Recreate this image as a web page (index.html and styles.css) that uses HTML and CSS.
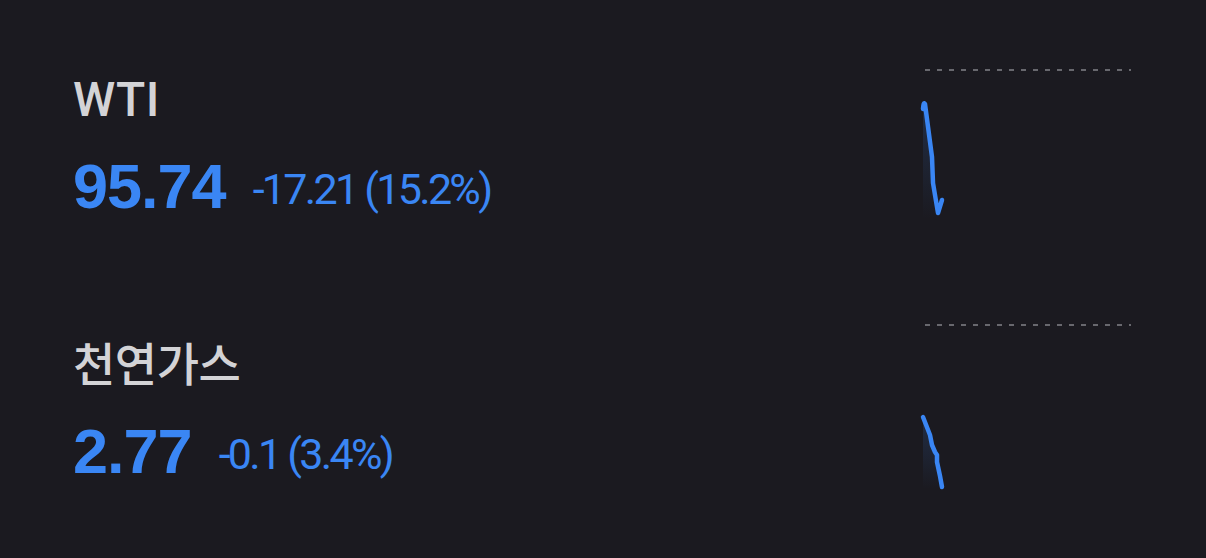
FILE: index.html
```html
<!DOCTYPE html>
<html lang="ko">

<head>
    <meta charset="UTF-8">
    <meta name="viewport" content="width=device-width, initial-scale=1.0">
    <title>원자재 시세</title>
    <link rel="stylesheet" href="styles.css">
</head>

<body>
    <div class="board">
        <div class="quote">
            <div class="info">
                <div class="name">WTI</div>
                <div class="price">
                    <span class="last">95.74</span>
                    <span class="change">-17.21 (15.2%)</span>
                </div>
            </div>
            <svg class="spark" width="220" height="265" viewBox="0 0 220 265">
                <defs>
                    <linearGradient id="fadeA" x1="0" y1="0" x2="0" y2="1">
                        <stop offset="0" stop-color="#3a86f4" stop-opacity="0.18" />
                        <stop offset="1" stop-color="#3a86f4" stop-opacity="0" />
                    </linearGradient>
                </defs>
                <line class="base" x1="10" y1="16" x2="216" y2="16" />
                <path d="M8 50 L17 103 L18 129 L22 153 L23 165 L8 165 Z" fill="url(#fadeA)" />
                <path class="line" d="M8 55 Q8.5 47 10 50 L17 103 L18 129 L22 153 L23 159 L27 146" />
            </svg>
        </div>
        <div class="quote">
            <div class="info">
                <div class="name name-ko">천연가스</div>
                <div class="price">
                    <span class="last">2.77</span>
                    <span class="change">-0.1 (3.4%)</span>
                </div>
            </div>
            <svg class="spark" width="220" height="265" viewBox="0 0 220 265">
                <defs>
                    <linearGradient id="fadeB" x1="0" y1="0" x2="0" y2="1">
                        <stop offset="0" stop-color="#3a86f4" stop-opacity="0.18" />
                        <stop offset="1" stop-color="#3a86f4" stop-opacity="0" />
                    </linearGradient>
                </defs>
                <line class="base" x1="10" y1="6" x2="216" y2="6" />
                <path d="M8 98 L15 116 L17 126 L20 133 L22 136 L22 143 L25 157 L27 168 L8 170 Z" fill="url(#fadeB)" />
                <path class="line" d="M8 98 L15 116 L17 126 L20 133 L22 136 L22 143 L25 157 L27 168" />
            </svg>
        </div>
    </div>
</body>

</html>
```
FILE: styles.css
```css
html,
body {
    margin: 0;
    padding: 0;
    height: 100%;
}

body {
    background: #1b1a20;
    overflow: hidden;
    font-family: "Liberation Sans", "Noto Sans CJK KR", sans-serif;
}

.board {
    padding-top: 54px;
}

.quote {
    height: 265px;
    display: flex;
    justify-content: space-between;
    align-items: flex-start;
    padding-left: 73px;
    padding-right: 71px;
}

.name {
    margin-top: 23px;
    font-family: Roboto, "Noto Sans CJK KR", sans-serif;
    font-weight: 500;
    font-size: 48px;
    line-height: 46px;
    letter-spacing: 0.5px;
    color: #d3d3d6;
}

.name-ko {
    font-size: 46px;
    letter-spacing: -0.5px;
}

.price {
    margin-top: 32px;
    display: flex;
    align-items: flex-end;
    gap: 27px;
    color: #3a86f4;
}

.last {
    font-family: "Liberation Sans", sans-serif;
    font-weight: 700;
    font-size: 63px;
    line-height: 62px;
    letter-spacing: -1px;
}

.change {
    font-family: Roboto, sans-serif;
    font-size: 43px;
    line-height: 56px;
    letter-spacing: -2.7px;
}

.spark .base {
    stroke: #68686e;
    stroke-width: 2;
    stroke-dasharray: 5 7;
}

.spark .line {
    fill: none;
    stroke: #3a86f4;
    stroke-width: 4.5;
    stroke-linecap: round;
    stroke-linejoin: round;
}
```
